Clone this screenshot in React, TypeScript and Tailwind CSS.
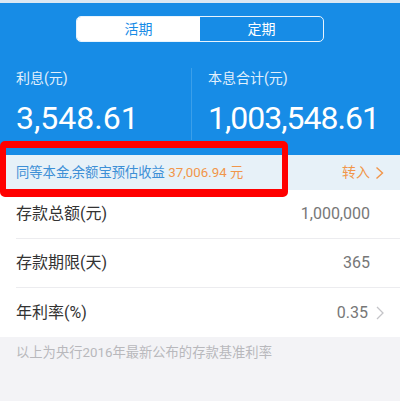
const font = { fontFamily: 'Roboto, "Noto Sans CJK SC", sans-serif' };

function Row({ label, value, arrow, last }: { label: string; value: string; arrow?: boolean; last?: boolean }) {
  return (
    <div className="pl-4 bg-white">
      <div
        className={`h-[49px] flex items-center justify-between ${arrow ? 'pr-[16px]' : 'pr-[30px]'} ${
          last ? '' : 'border-b border-[#ececef]'
        }`}
      >
        <span className="text-[16px] text-[#333333]">{label}</span>
        <span className="flex items-center gap-[8px] text-[16px] text-[#777777]">
          {value}
          {arrow && (
            <svg width="8" height="14" viewBox="0 0 8 14" fill="none">
              <path d="M1 1 L7 7 L1 13" stroke="#c4c4c8" strokeWidth="1.3" />
            </svg>
          )}
        </span>
      </div>
    </div>
  );
}

export default function App() {
  return (
    <div className="relative w-[400px] h-[401px] overflow-hidden bg-[#f3f3f6]" style={font}>
      <div className="h-[3px] bg-[#dce8f3]" />

      <div className="bg-[#178ce6] h-[152px] pt-[13px]">
        <div className="mx-auto w-[248px] h-[26px] flex border border-white/90 rounded-[5px] overflow-hidden text-[14px]">
          <div className="flex-1 bg-white text-[#178ce6] flex items-center justify-center">活期</div>
          <div className="flex-1 text-white flex items-center justify-center">定期</div>
        </div>

        <div className="mt-[26px] flex h-[72px]">
          <div className="w-[192px] pl-4 border-r border-[#3b9fea]">
            <div className="text-[14px] leading-[20px] text-[#e2f0fc]">利息(元)</div>
            <div className="mt-[10px] text-[32px] leading-[40px] text-white">3,548.61</div>
          </div>
          <div className="flex-1 pl-4">
            <div className="text-[14px] leading-[20px] text-[#e2f0fc]">本息合计(元)</div>
            <div className="mt-[10px] text-[32px] leading-[40px] tracking-[-1px] text-white">1,003,548.61</div>
          </div>
        </div>
      </div>

      <div className="h-[35px] bg-[#e7f1f8] flex items-center justify-between pl-4 pr-[16px] text-[13.3px]">
        <span className="text-[#3d8fd6]">
          同等本金,余额宝预估收益 <span className="text-[#f1964a]">37,006.94 元</span>
        </span>
        <span className="flex items-center gap-[5px] text-[#f1964a] text-[14px]">
          转入
          <svg width="9" height="14" viewBox="0 0 9 14" fill="none">
            <path d="M1.5 1.5 L7.5 7 L1.5 12.5" stroke="#f1964a" strokeWidth="1.4" />
          </svg>
        </span>
      </div>

      <Row label="存款总额(元)" value="1,000,000" />
      <Row label="存款期限(天)" value="365" />
      <Row label="年利率(%)" value="0.35" arrow last />

      <div className="pl-4 pt-[7px] text-[13.3px] leading-[18px] text-[#b8b8bc]">以上为央行2016年最新公布的存款基准利率</div>

      <div className="absolute left-0 top-[141px] w-[288px] h-[56px] border-x-[6px] border-t-[7px] border-b-[8px] border-[#ff0000] rounded-[5px]" />
    </div>
  );
}
